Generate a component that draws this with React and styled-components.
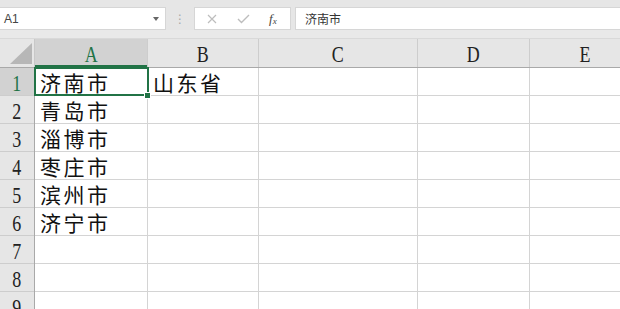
import React from 'react';
import styled, { createGlobalStyle } from 'styled-components';

const GlobalStyle = createGlobalStyle`
  html, body {
    margin: 0;
    padding: 0;
    background: #ffffff;
  }
`;

const green = '#217346';

const columns = [
  { key: 'A', width: 113 },
  { key: 'B', width: 111 },
  { key: 'C', width: 159 },
  { key: 'D', width: 112 },
  { key: 'E', width: 112 },
];

const rows = [
  ['济南市', '山东省'],
  ['青岛市'],
  ['淄博市'],
  ['枣庄市'],
  ['滨州市'],
  ['济宁市'],
  [],
  [],
  [],
];

const App = () => {
  return (
    <Sheet>
      <GlobalStyle />
      <FormulaBar>
        <NameBox>
          <span>A1</span>
          <Caret />
        </NameBox>
        <Grip>⋮</Grip>
        <ActionBox>
          <ActionIcon>
            <svg width="10" height="10" viewBox="0 0 10 10">
              <path d="M1 1 L9 9 M9 1 L1 9" stroke="#bdbdbd" strokeWidth="1.2" fill="none" />
            </svg>
          </ActionIcon>
          <ActionIcon>
            <svg width="13" height="10" viewBox="0 0 13 10">
              <path d="M1 5 L4.5 8.5 L12 1" stroke="#bdbdbd" strokeWidth="1.4" fill="none" />
            </svg>
          </ActionIcon>
          <FxLabel>
            f<sub>x</sub>
          </FxLabel>
        </ActionBox>
        <FormulaInput>济南市</FormulaInput>
      </FormulaBar>
      <Gap />
      <Grid>
        <HeaderRow>
          <Corner>
            <svg width="22" height="21" viewBox="0 0 22 21">
              <path d="M22 0 L22 21 L0 21 Z" fill="#b7b7b7" />
            </svg>
          </Corner>
          {columns.map((c) => (
            <ColHeader key={c.key} $w={c.width} $active={c.key === 'A'}>
              <HeadText>{c.key}</HeadText>
            </ColHeader>
          ))}
        </HeaderRow>
        {rows.map((cells, i) => (
          <Row key={i}>
            <RowHeader $active={i === 0}>
              <HeadText>{i + 1}</HeadText>
            </RowHeader>
            {columns.map((c, j) => (
              <Cell key={c.key} $w={c.width} $selected={i === 0 && j === 0}>
                {cells[j] || ''}
                {i === 0 && j === 0 && <FillHandle />}
              </Cell>
            ))}
          </Row>
        ))}
      </Grid>
    </Sheet>
  );
};

const Sheet = styled.div`
  width: 620px;
  height: 309px;
  overflow: hidden;
  background: #e6e6e6;
  display: flex;
  flex-direction: column;

  & > * {
    flex-shrink: 0;
  }
`;

const FormulaBar = styled.div`
  display: flex;
  align-items: stretch;
  height: 23px;
  padding-top: 7px;
  background: #e6e6e6;
`;

const NameBox = styled.div`
  width: 166px;
  box-sizing: border-box;
  background: #fff;
  border: 1px solid #d6d6d6;
  border-left: none;
  display: flex;
  align-items: center;
  justify-content: space-between;
  padding: 0 6px 0 4px;
  font-family: 'Liberation Sans', Arial, sans-serif;
  font-size: 12px;
  color: #444;
`;

const Caret = styled.span`
  width: 0;
  height: 0;
  border-left: 3.5px solid transparent;
  border-right: 3.5px solid transparent;
  border-top: 4px solid #666;
`;

const Grip = styled.div`
  width: 28px;
  display: flex;
  align-items: center;
  justify-content: center;
  color: #a8a8a8;
  font-family: 'DejaVu Sans', sans-serif;
  font-size: 12px;
`;

const ActionBox = styled.div`
  width: 97px;
  box-sizing: border-box;
  background: #fff;
  border: 1px solid #d6d6d6;
  display: flex;
  align-items: center;
  padding-left: 12px;
  gap: 17px;
`;

const ActionIcon = styled.span`
  display: flex;
  align-items: center;
  width: 13px;
`;

const FxLabel = styled.span`
  font-family: 'Liberation Serif', serif;
  font-style: italic;
  font-size: 13px;
  color: #444;
  margin-left: 2px;

  sub {
    font-size: 9px;
    vertical-align: -1px;
  }
`;

const FormulaInput = styled.div`
  flex: 1;
  margin-left: 4px;
  box-sizing: border-box;
  background: #fff;
  border: 1px solid #d6d6d6;
  border-right: none;
  display: flex;
  align-items: center;
  padding-left: 9px;
  font-family: 'Noto Sans CJK SC', sans-serif;
  font-size: 12px;
  color: #333;
`;

const Gap = styled.div`
  height: 8px;
  border-bottom: 1px solid #d9d9d9;
  background: #e9e9e9;
`;

const Grid = styled.div`
  background: #fff;
`;

const HeaderRow = styled.div`
  display: flex;
  height: 28px;
  background: #e6e6e6;
  border-bottom: 1px solid #a9a9a9;
`;

const Corner = styled.div`
  width: 35px;
  flex-shrink: 0;
  box-sizing: border-box;
  display: flex;
  align-items: flex-end;
  justify-content: flex-end;
  padding: 0 2px 3px 0;
  border-right: 1px solid #c8c8c8;
`;

const ColHeader = styled.div`
  width: ${(p) => p.$w}px;
  flex-shrink: 0;
  box-sizing: border-box;
  display: flex;
  align-items: center;
  justify-content: center;
  padding-top: 2px;
  border-right: 1px solid #cdcdcd;
  background: ${(p) => (p.$active ? '#d2d2d2' : 'transparent')};
  color: ${(p) => (p.$active ? green : '#222')};
  box-shadow: ${(p) => (p.$active ? `inset 0 -2px 0 ${green}` : 'none')};
`;

const HeadText = styled.span`
  display: inline-block;
  font-family: 'Liberation Serif', 'Times New Roman', serif;
  font-size: 23px;
  line-height: 1;
  transform: scaleX(0.78);
`;

const Row = styled.div`
  display: flex;
  height: 27px;
  border-bottom: 1px solid #d4d4d4;
`;

const RowHeader = styled.div`
  width: 35px;
  flex-shrink: 0;
  box-sizing: border-box;
  display: flex;
  align-items: center;
  justify-content: center;
  background: ${(p) => (p.$active ? '#d2d2d2' : '#e6e6e6')};
  color: ${(p) => (p.$active ? green : '#222')};
  border-right: 1px solid #a9a9a9;
  box-shadow: inset 0 -1px 0 #cdcdcd;
  margin-bottom: -1px;
  padding-top: 3px;
`;

const Cell = styled.div`
  position: relative;
  width: ${(p) => p.$w}px;
  flex-shrink: 0;
  box-sizing: border-box;
  border-right: 1px solid #d4d4d4;
  display: flex;
  align-items: center;
  padding-left: 5px;
  padding-top: 1px;
  font-family: 'Noto Sans CJK SC', sans-serif;
  font-size: 21px;
  letter-spacing: 2.5px;
  color: #111;
  white-space: nowrap;
  outline: ${(p) => (p.$selected ? `2px solid ${green}` : 'none')};
  outline-offset: -1px;
  z-index: ${(p) => (p.$selected ? 1 : 0)};
`;

const FillHandle = styled.span`
  position: absolute;
  right: -4px;
  bottom: -4px;
  width: 5px;
  height: 5px;
  background: ${green};
  border: 1px solid #fff;
`;

export default App;
